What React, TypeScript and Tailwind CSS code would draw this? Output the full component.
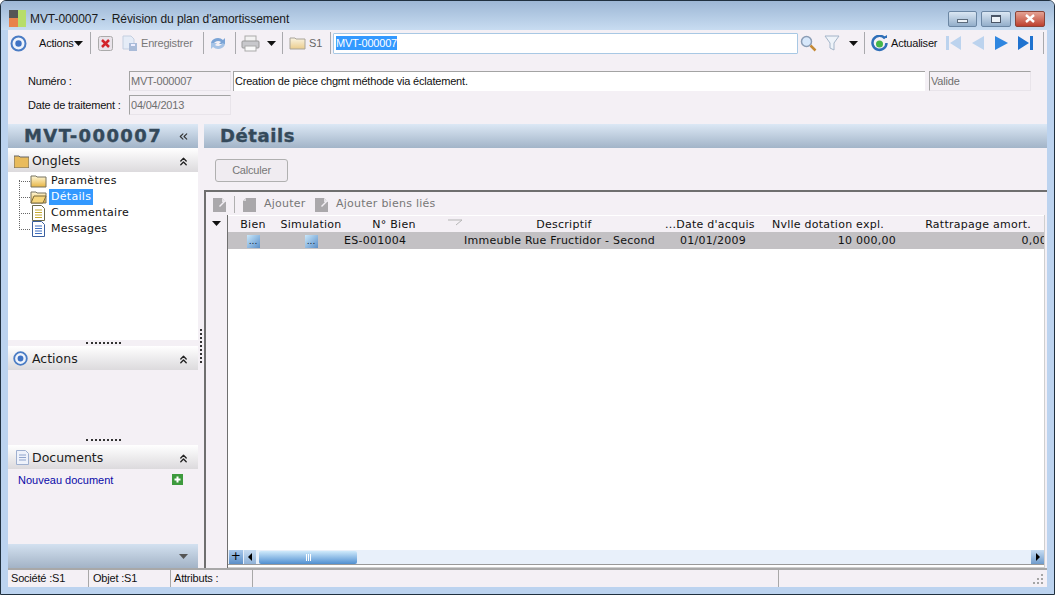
import { ChevronsUp, ChevronsLeft } from "lucide-react";

const Caret = ({ className = "" }: { className?: string }) => (
	<svg width="9" height="5" viewBox="0 0 9 5" className={className}>
		<path d="M0 0h9L4.5 5z" fill="#111" />
	</svg>
);

const Sep = ({ className = "" }: { className?: string }) => (
	<div className={`w-px h-[22px] bg-[#a9a9ad] shrink-0 ${className}`} />
);

const Target = ({ className = "" }: { className?: string }) => (
	<svg width="17" height="17" viewBox="0 0 17 17" className={className}>
		<circle cx="8.5" cy="8.5" r="7" fill="#eef3fb" stroke="#4a7cc4" strokeWidth="2" />
		<circle cx="8.5" cy="8.5" r="3.2" fill="#3f73c4" />
	</svg>
);

const Folder = ({ open = false }: { open?: boolean }) => (
	<svg width="17" height="14" viewBox="0 0 17 14">
		<defs>
			<linearGradient id="fold" x1="0" y1="0" x2="0" y2="1">
				<stop offset="0" stopColor="#fff8d8" />
				<stop offset="1" stopColor="#e6b545" />
			</linearGradient>
		</defs>
		<path d="M1 2h5l1 1h9v10H1z" fill="url(#fold)" stroke="#77735f" />
		{open && <path d="M1 13l3-7h12l-3 7z" fill="#f6d67c" stroke="#7a6a3c" />}
	</svg>
);

const DocIcon = ({ blue = false }: { blue?: boolean }) => (
	<svg width="13" height="16" viewBox="0 0 13 16">
		<path d="M.5.5h9l3 3v12H.5z" fill="#fff" stroke={blue ? "#3a5f9e" : "#6a6a4a"} />
		<path
			d="M3 5h7M3 7.5h7M3 10h7M3 12.5h7"
			stroke={blue ? "#3f6fc0" : "#c4a72c"}
			strokeWidth="1"
		/>
	</svg>
);

const GreyDoc = () => (
	<svg width="15" height="16" viewBox="0 0 15 16">
		<path d="M4 1h10v14H1V4z" fill="#a9a7aa" />
		<path d="M1 4h3V1z" fill="#d9d7da" />
	</svg>
);

const GreyDocEdit = () => (
	<svg width="15" height="16" viewBox="0 0 15 16">
		<path d="M1 1h9l4 4v10H1z" fill="#aaa8ab" />
		<path d="M10 1v4h4z" fill="#e5e3e6" />
		<path d="M14 2L7 9l1 1 6-6z" fill="#f3eff5" />
	</svg>
);

const PaneHeader = ({
	icon,
	label,
}: {
	icon: React.ReactNode;
	label: string;
}) => (
	<div className="h-6 shrink-0 flex items-center bg-gradient-to-b from-white to-[#dcdadd]">
		<div className="w-6 flex justify-end pr-[3px]">{icon}</div>
		<span className="text-[12.5px] pt-[2px] tracking-normal text-[#1c1c1c] font-['DejaVu_Sans',sans-serif]">
			{label}
		</span>
		<ChevronsUp size={13} strokeWidth={2.5} className="ml-auto mr-[8px] mt-[2px] text-[#222]" />
	</div>
);

const Grip = ({ className = "" }: { className?: string }) => (
	<div className={`flex justify-center items-center ${className}`}>
		<div className="w-[35px] border-t-2 border-dotted border-[#333]" />
	</div>
);

const tree = [
	{ label: "Paramètres", icon: <Folder /> },
	{ label: "Détails", icon: <Folder open />, selected: true },
	{ label: "Commentaire", icon: <DocIcon /> },
	{ label: "Messages", icon: <DocIcon blue /> },
];

const Ellipsis = () => (
	<div className="w-[13px] h-[13px] mx-auto bg-gradient-to-br from-[#c9e8fb] to-[#5b8fc8] text-[9px] leading-[13px] tracking-normal text-center text-[#123] font-['DejaVu_Sans',sans-serif]">
		...
	</div>
);

const columns = "grid grid-cols-[50px_66px_100px_220px_90px_142px_147px]";
const windowButton =
	"h-[16px] rounded-[2px] border bg-gradient-to-b flex items-center justify-center";

export default function App() {
	return (
		<div className="w-[1055px] h-[595px] flex flex-col overflow-hidden rounded-t-md border border-[#20303f] bg-[#bcd3ef] text-[11px] tracking-[-0.2px] text-[#111] font-['Liberation_Sans',Arial,sans-serif]">
			{/* title bar */}
			<div className="h-[29px] shrink-0 flex items-center pl-[8px] bg-gradient-to-b from-[#9db7d5] to-[#c8dcf1]">
				<div className="w-[17px] h-[17px] mt-[5px] grid grid-cols-2 shrink-0">
					<div className="bg-[#555]" />
					<div className="row-span-2 bg-[#b7dd6a]" />
					<div className="bg-[#e8824a]" />
				</div>
				<span className="ml-[4px] mt-[6px] text-[12px] tracking-[-0.07px] whitespace-pre text-[#1a1a1a]">
					MVT-000007 -  Révision du plan d'amortissement
				</span>
				<div className="ml-auto mr-[9px] mt-[6px] flex gap-[4px]">
					<div className={`${windowButton} w-[29px] border-[#6b86a3] from-[#dbe7f3] to-[#93aeca]`}>
						<div className="w-[11px] h-[4px] mt-[5px] bg-[#eef3f8] border border-[#5c6b7c]" />
					</div>
					<div className={`${windowButton} w-[30px] border-[#6b86a3] from-[#dbe7f3] to-[#93aeca]`}>
						<div className="w-[10px] h-[8px] bg-[#eef3f8] border border-t-2 border-[#4a5566]" />
					</div>
					<div className={`${windowButton} w-[30px] border-[#8a4438] from-[#e3a294] to-[#bd3f2e]`}>
						<svg width="12" height="9" viewBox="0 0 12 9">
							<path d="M2 1l8 7M10 1L2 8" stroke="#fff" strokeWidth="2.4" />
						</svg>
					</div>
				</div>
			</div>

			<div className="flex-1 min-h-0 flex flex-col mx-[7px] mb-[7px] bg-[#f4f0f5]">
				{/* toolbar */}
				<div className="h-[26px] shrink-0 flex items-center">
					<Target className="ml-[2px] shrink-0" />
					<span className="ml-[12px] w-[35px] shrink-0 whitespace-nowrap">Actions</span>
					<Caret className="shrink-0" />
					<Sep className="ml-[7px]" />
					<svg width="15" height="15" viewBox="0 0 15 15" className="ml-[7px] shrink-0">
						<rect x=".5" y=".5" width="14" height="14" rx="2" fill="#e9e3ea" stroke="#aaa" />
						<path d="M4 4l7 7M11 4l-7 7" stroke="#d2232a" strokeWidth="2.5" />
					</svg>
					<svg width="16" height="16" viewBox="0 0 16 16" className="ml-[9px] shrink-0">
						<path d="M1 1h8l3 3v10H1z" fill="#e5ecf7" stroke="#c4cfe0" />
						<rect x="7" y="8" width="8" height="8" fill="#a9bbd8" />
						<rect x="9" y="9" width="4" height="2" fill="#eef" />
					</svg>
					<span className="ml-[3px] w-[53px] shrink-0 whitespace-nowrap text-[#777]">Enregistrer</span>
					<Sep className="ml-[9px]" />
					<svg width="18" height="17" viewBox="0 0 18 17" className="ml-[5px] shrink-0">
						<path d="M2 8a7 6 0 0 1 12-3l2-2v6h-6l2-2a4 3 0 0 0-7 2z" fill="#7ba4d6" />
						<path d="M16 9a7 6 0 0 1-12 3l-2 2V8h6l-2 2a4 3 0 0 0 7-2z" fill="#a6c3e6" />
					</svg>
					<Sep className="ml-[8px]" />
					<svg width="19" height="17" viewBox="0 0 19 17" className="ml-[5px] shrink-0">
						<rect x="4" y="1" width="11" height="6" fill="#f2f2f2" stroke="#aaa" />
						<rect x="1" y="6" width="17" height="7" rx="1" fill="#c8c8cc" stroke="#999" />
						<rect x="4" y="11" width="11" height="5" fill="#fafafa" stroke="#aaa" />
					</svg>
					<Caret className="ml-[7px] shrink-0" />
					<Sep className="ml-[6px]" />
					<div className="ml-[6px] shrink-0 opacity-60">
						<Folder />
					</div>
					<span className="ml-[3px] w-[12px] shrink-0 text-[#666]">S1</span>
					<Sep className="ml-[9px]" />
					<div className="ml-[2px] w-[465px] h-[21px] shrink-0 bg-white border border-[#a8c8e4] rounded-[1px] flex items-center pl-[2px]">
						<span className="bg-[#3399ff] text-white leading-[14px]">MVT-000007</span>
					</div>
					<svg width="17" height="17" viewBox="0 0 17 17" className="ml-[2px] shrink-0">
						<circle cx="6.5" cy="6.5" r="5" fill="#d7e8fb" stroke="#8b9db5" strokeWidth="1.5" />
						<path d="M10.5 10.5l5 5" stroke="#c58a35" strokeWidth="2.5" />
					</svg>
					<svg width="16" height="16" viewBox="0 0 16 16" className="ml-[7px] shrink-0">
						<path d="M1 1h14l-5 7v7l-4-2V8z" fill="#eef3f9" stroke="#a3b4c8" />
					</svg>
					<Caret className="ml-[9px] shrink-0" />
					<Sep className="ml-[6px]" />
					<svg width="17" height="17" viewBox="0 0 17 17" className="ml-[6px] shrink-0">
						<path d="M14 3.5A7 7 0 1 0 15.5 8" fill="none" stroke="#2f6fb8" strokeWidth="2.5" />
						<path d="M11 3h5V0z" fill="#2f6fb8" />
						<circle cx="8.5" cy="9" r="3.5" fill="#45b649" />
					</svg>
					<span className="ml-[3px] w-[48px] shrink-0 whitespace-nowrap">Actualiser</span>
					<svg width="16" height="14" viewBox="0 0 16 14" className="ml-[7px] shrink-0">
						<path d="M0 0h3v14H0zM15 0v14L4 7z" fill="#bcd3ee" />
					</svg>
					<svg width="12" height="14" viewBox="0 0 12 14" className="ml-[10px] shrink-0">
						<path d="M12 0v14L0 7z" fill="#bcd3ee" />
					</svg>
					<svg width="13" height="14" viewBox="0 0 13 14" className="ml-[11px] shrink-0">
						<path d="M0 0v14L13 7z" fill="#2f86e0" />
					</svg>
					<svg width="15" height="14" viewBox="0 0 15 14" className="ml-[10px] shrink-0">
						<path d="M0 0v14L11 7zM12 0h3v14h-3z" fill="#1f72cf" />
					</svg>
					<Sep className="ml-[10px]" />
				</div>

				{/* form */}
				<div className="h-[68px] shrink-0 pt-[15px] flex flex-col gap-[4px]">
					<div className="flex items-center">
						<span className="ml-[20px] w-[101px]">Numéro :</span>
						<div className="w-[102px] h-[20px] pl-[1px] flex items-center border border-t-[#a3a3a3] border-l-[#a3a3a3] border-r-[#e8e4ea] border-b-[#e8e4ea] text-[#6f6f6f]">
							MVT-000007
						</div>
						<div className="ml-[2px] w-[692px] h-[20px] pl-[1px] flex items-center bg-white border-t border-l border-[#a3a3a3]">
							Creation de pièce chgmt méthode via éclatement.
						</div>
						<div className="ml-[4px] w-[102px] h-[20px] pl-[1px] flex items-center border border-t-[#a3a3a3] border-l-[#a3a3a3] border-r-[#e8e4ea] border-b-[#e8e4ea] text-[#6f6f6f]">
							Valide
						</div>
					</div>
					<div className="flex items-center">
						<span className="ml-[20px] w-[101px]">Date de traitement :</span>
						<div className="w-[102px] h-[20px] pl-[1px] flex items-center border border-t-[#a3a3a3] border-l-[#a3a3a3] border-r-[#e8e4ea] border-b-[#e8e4ea] text-[#6f6f6f]">
							04/04/2013
						</div>
					</div>
				</div>

				<div className="flex-1 min-h-0 flex">
					{/* left panel */}
					<div className="w-[190px] shrink-0 flex flex-col">
						<div className="h-[24px] shrink-0 flex items-center bg-gradient-to-b from-[#dce8f5] to-[#a2b4c8]">
							<span className="ml-[16px] text-[18px] tracking-[1.4px] font-bold text-[#34495a] [-webkit-text-stroke:0.4px_#34495a] font-['DejaVu_Sans',sans-serif] leading-none">
								MVT-000007
							</span>
							<ChevronsLeft size={13} className="ml-auto mr-[8px] text-[#333]" />
						</div>
						<PaneHeader
							label="Onglets"
							icon={
								<svg width="15" height="13" viewBox="0 0 15 13" className="mt-[2px]">
									<path d="M0 1h5l1 1h9v11H0z" fill="#e8bb5c" stroke="#666" />
								</svg>
							}
						/>
						<div className="h-[168px] shrink-0 bg-white relative pt-[1px] tracking-[0.3px] font-['DejaVu_Sans',sans-serif]">
							<div className="absolute left-[11px] top-[8px] h-[48px] border-l border-dotted border-[#666]" />
							{tree.map((item) => (
								<div key={item.label} className="h-4 flex items-center pl-[11px]">
									<div className="w-[11px] border-t border-dotted border-[#666] shrink-0" />
									<div className="w-[17px] flex justify-center shrink-0">{item.icon}</div>
									<span
										className={`ml-[2px] px-[2px] leading-4 ${
											item.selected ? "bg-[#3399ff] text-white" : ""
										}`}>
										{item.label}
									</span>
								</div>
							))}
						</div>
						<Grip className="h-[6px] shrink-0 bg-[#f4f0f5]" />
						<PaneHeader label="Actions" icon={<Target className="scale-90" />} />
						<div className="h-[65px] shrink-0" />
						<Grip className="h-[10px] shrink-0" />
						<PaneHeader
							label="Documents"
							icon={
								<svg width="13" height="15" viewBox="0 0 13 15">
									<path d="M.5.5h9l3 3v11H.5z" fill="#eef2fb" stroke="#9fb0d0" />
									<path d="M3 5h7M3 7.5h7M3 10h7" stroke="#8fa4cc" />
								</svg>
							}
						/>
						<div className="flex-1 flex items-start pt-[3px]">
							<span className="ml-[10px] tracking-normal text-[#0a0aa8]">Nouveau document</span>
							<svg width="11" height="11" viewBox="0 0 11 11" className="ml-auto mr-[15px] mt-[2px]">
								<rect width="11" height="11" fill="#3d9a3d" />
								<path d="M5.5 2.5v6M2.5 5.5h6" stroke="#fff" strokeWidth="2" />
							</svg>
						</div>
						<div className="h-[24px] shrink-0 flex items-center justify-end pr-[10px] bg-gradient-to-b from-[#d3e1f0] to-[#a3b3c6]">
							<svg width="9" height="5" viewBox="0 0 9 5">
								<path d="M0 0h9L4.5 5z" fill="#555" />
							</svg>
						</div>
					</div>

					{/* splitter */}
					<div className="w-[6px] shrink-0 flex items-center justify-center">
						<div className="h-[34px] border-l-2 border-dotted border-[#333]" />
					</div>

					{/* right panel */}
					<div className="flex-1 min-w-0 flex flex-col">
						<div className="h-[24px] shrink-0 flex items-center bg-gradient-to-b from-[#dce8f5] to-[#a2b4c8]">
							<span className="ml-[16px] text-[18px] tracking-[0.6px] font-bold text-[#34495a] [-webkit-text-stroke:0.4px_#34495a] font-['DejaVu_Sans',sans-serif] leading-none">
								Détails
							</span>
						</div>
						<div className="h-[42px] shrink-0 flex items-center pl-[11px] pt-[2px]">
							<div className="w-[73px] h-[23px] rounded-[3px] border border-[#b0b0b0] bg-[#f0ecf1] flex items-center justify-center text-[#777]">
								Calculer
							</div>
						</div>
						<div className="flex-1 min-h-0 flex flex-col border-t-2 border-l-2 border-[#6f6f6f] tracking-[0.25px] font-['DejaVu_Sans',sans-serif]">
							<div className="h-[23px] shrink-0 flex items-center pt-[2px] text-[#777]">
								<div className="ml-[6px] shrink-0">
									<GreyDocEdit />
								</div>
								<div className="ml-[7px] w-px h-[17px] bg-[#b0b0b0] shrink-0" />
								<div className="ml-[7px] shrink-0">
									<GreyDoc />
								</div>
								<span className="ml-[7px] w-[42px] shrink-0">Ajouter</span>
								<div className="ml-[8px] shrink-0">
									<GreyDocEdit />
								</div>
								<span className="ml-[7px]">Ajouter biens liés</span>
							</div>
							<div className="flex-1 min-h-0 flex">
								<div className="w-[22px] shrink-0 border-r border-[#6f6f6f] pt-[6px] pl-[6px]">
									<Caret />
								</div>
								<div className="flex-1 min-w-0 flex flex-col bg-white mr-[2px] border-r border-b border-[#cfcfcf] overflow-hidden">
									<div className={`${columns} h-[17px] shrink-0 items-center pt-px border-t border-white bg-[#f4f0f5] whitespace-nowrap`}>
										<div className="text-center">Bien</div>
										<div className="text-center">Simulation</div>
										<div className="text-center">N° Bien</div>
										<div className="relative text-center pl-5">
											Descriptif
											<svg width="16" height="7" viewBox="0 0 16 7" className="absolute left-[3px] top-[2px]">
												<path d="M1 1h14L9 6" fill="none" stroke="#b5b5b5" />
											</svg>
										</div>
										<div className="pl-[1px]">...Date d'acquis</div>
										<div className="text-right pr-3">Nvlle dotation expl.</div>
										<div className="text-right pr-3">Rattrapage amort.</div>
									</div>
									<div className={`${columns} h-[17px] shrink-0 items-center pt-px bg-[#c3c1c4] whitespace-nowrap`}>
										<Ellipsis />
										<Ellipsis />
										<div>ES-001004</div>
										<div className="pl-5">Immeuble Rue Fructidor - Second</div>
										<div className="pl-4">01/01/2009</div>
										<div className="text-right">10 000,00</div>
										<div className="text-right -mr-[4px]">0,00</div>
									</div>
									<div className="flex-1" />
									<div className="h-[15px] shrink-0 mb-[2px] flex items-center bg-[#e8f0fa] border-b border-[#999]">
										<div className="ml-px w-[14px] h-[14px] bg-gradient-to-b from-[#a9c8ea] to-[#5b8fc8] text-center leading-[13px] text-[12px] text-black">
											+
										</div>
										<div className="ml-px w-[12px] h-[14px] bg-gradient-to-b from-[#c7dcf2] to-[#8fb2d8] flex items-center justify-center">
											<div className="w-0 h-0 border-y-[4px] border-y-transparent border-r-[4px] border-r-black" />
										</div>
										<div className="ml-[3px] w-[98px] h-[13px] rounded-[2px] bg-gradient-to-b from-[#cfeafb] to-[#4f8fd0] flex items-center justify-center gap-px">
											<div className="w-px h-[7px] bg-white" />
											<div className="w-px h-[7px] bg-white" />
											<div className="w-px h-[7px] bg-white" />
										</div>
										<div className="ml-auto w-[13px] h-[14px] bg-gradient-to-b from-[#c7dcf2] to-[#6f9ccc] flex items-center justify-center">
											<div className="w-0 h-0 border-y-[4px] border-y-transparent border-l-[4px] border-l-black" />
										</div>
									</div>
								</div>
							</div>
						</div>
					</div>
				</div>

				{/* status bar */}
				<div className="h-[19px] shrink-0 flex items-center border-t-2 border-[#a8a8a8] bg-[#f4f0f5]">
					<div className="w-[80px] ml-px pl-[2px] h-full flex items-center border-r border-[#a8a8a8]">Société :S1</div>
					<div className="w-[82px] pl-[4px] h-full flex items-center border-r border-[#a8a8a8]">Objet :S1</div>
					<div className="w-[82px] pl-[3px] h-full flex items-center border-r border-[#a8a8a8]">Attributs :</div>
					<div className="w-[526px] h-full border-r border-[#a8a8a8]" />
					<div className="flex-1 flex justify-end pr-[3px]">
						<svg width="11" height="11" viewBox="0 0 11 11">
							<path d="M8 1h2v2H8zM4 5h2v2H4zM8 5h2v2H8zM0 9h2v2H0zM4 9h2v2H4zM8 9h2v2H8z" fill="#a5a5a5" />
						</svg>
					</div>
				</div>
			</div>
		</div>
	);
}
